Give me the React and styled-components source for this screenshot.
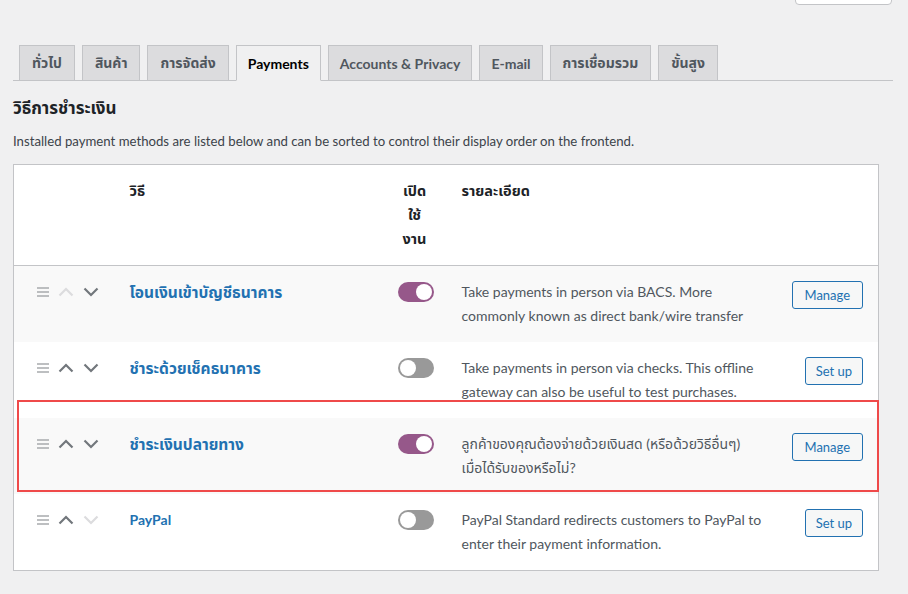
import React from "react";
import styled, { createGlobalStyle } from "styled-components";

const GlobalStyle = createGlobalStyle`
  html, body {
    margin: 0;
    padding: 0;
    background: #f0f0f1;
  }
  body {
    font-family: Lato, "Open Sans", "Noto Sans Thai", sans-serif;
    font-size: 13px;
    color: #3c434a;
  }
`;

const Page = styled.div`
  width: 908px;
  height: 594px;
  overflow: hidden;
`;

const TopBar = styled.div`
  height: 5px;
  display: flex;
  justify-content: flex-end;
  align-items: flex-end;
  overflow: hidden;
  padding-right: 16px;
`;

const HelpButton = styled.div`
  width: 97px;
  height: 30px;
  flex-shrink: 0;
  background: #fff;
  border: 1px solid #c3c4c7;
  border-radius: 0 0 4px 4px;
  box-sizing: border-box;
`;

const TabNav = styled.nav`
  margin: 40px 15px 0 13px;
  padding-left: 6px;
  display: flex;
  gap: 7px;
  border-bottom: 1px solid #c3c4c7;
`;

const Tab = styled.div`
  height: 36px;
  box-sizing: border-box;
  padding: 0 ${(p) => (p.$thai ? "12px" : "11px")};
  display: flex;
  align-items: center;
  border: 1px solid #c3c4c7;
  margin-bottom: -1px;
  background: ${(p) => (p.$active ? "#f0f0f1" : "#dcdcde")};
  border-bottom: 1px solid ${(p) => (p.$active ? "#f0f0f1" : "#c3c4c7")};
  color: ${(p) => (p.$active ? "#000" : "#50575e")};
  font-size: 14px;
  font-weight: 700;
  white-space: nowrap;
`;

const Content = styled.div`
  padding: 0 30px 0 13px;
`;

const Heading = styled.h2`
  margin: 15px 0 0;
  font-size: 17px;
  font-weight: 700;
  color: #1d2327;
  line-height: 24px;
`;

const Intro = styled.p`
  margin: 10px 0 12px;
  line-height: 22px;
  font-size: 13.2px;
  color: #3c434a;
`;

const TableWrap = styled.div`
  position: relative;
`;

const Table = styled.table`
  width: 865px;
  border-collapse: collapse;
  background: #fff;
  border: 1px solid #c3c4c7;
  table-layout: fixed;
`;

const Th = styled.th`
  text-align: ${(p) => p.$align || "left"};
  vertical-align: top;
  padding: 14px 15px;
  font-size: 14.5px;
  font-weight: 700;
  line-height: 24px;
  color: #1d2327;
  border-bottom: 1px solid #c3c4c7;
`;

const Row = styled.tr`
  background: ${(p) => (p.$alt ? "#f9f9f9" : "#fff")};
`;

const Td = styled.td`
  vertical-align: top;
  padding: 14px 15px 14px;
  line-height: 24px;
  text-align: ${(p) => p.$align || "left"};
`;

const SortCell = styled.div`
  display: flex;
  align-items: center;
  gap: 9px;
  height: 24px;
  padding-left: 8px;
`;

const MethodName = styled.a`
  color: #2271b1;
  font-weight: 700;
  font-size: ${(p) => (p.$thai ? "15.5px" : "14px")};
  text-decoration: none;
`;

const Toggle = styled.span`
  display: inline-block;
  position: relative;
  width: 36px;
  height: 20px;
  margin-top: 2px;
  border-radius: 10px;
  background: ${(p) => (p.$on ? "#96588a" : "#999")};
  vertical-align: top;

  &::after {
    content: "";
    position: absolute;
    top: 2px;
    left: ${(p) => (p.$on ? "18px" : "2px")};
    width: 16px;
    height: 16px;
    border-radius: 50%;
    background: #fff;
  }
`;

const Desc = styled.div`
  color: #50575e;
  font-size: 14px;
  white-space: nowrap;
`;

const ActionButton = styled.button`
  margin-top: 1px;
  font-family: inherit;
  font-size: 13px;
  line-height: 26px;
  height: 28px;
  padding: 0 ${(p) => (p.$wide ? "12px" : "10px")};
  color: #2271b1;
  background: #f6f7f7;
  border: 1px solid #2271b1;
  border-radius: 3px;
`;

const Highlight = styled.div`
  position: absolute;
  left: 4px;
  top: 236px;
  width: 862px;
  height: 92px;
  border: 2px solid #ef4a4a;
  box-sizing: border-box;
  pointer-events: none;
`;

const DragIcon = () => (
  <svg width="12" height="10" viewBox="0 0 12 10">
    <g stroke="#a7aaad" strokeWidth="1.5">
      <line x1="0" y1="1" x2="12" y2="1" />
      <line x1="0" y1="5" x2="12" y2="5" />
      <line x1="0" y1="9" x2="12" y2="9" />
    </g>
  </svg>
);

const Chevron = ({ up, disabled }) => (
  <svg width="16" height="10" viewBox="0 0 16 10">
    <polyline
      points={up ? "1.5,8.5 8,2 14.5,8.5" : "1.5,1.5 8,8 14.5,1.5"}
      fill="none"
      stroke={disabled ? "#dcdcde" : "#72777c"}
      strokeWidth="2.2"
    />
  </svg>
);

const tabs = [
  { label: "ทั่วไป", thai: true },
  { label: "สินค้า", thai: true },
  { label: "การจัดส่ง", thai: true },
  { label: "Payments" },
  { label: "Accounts & Privacy" },
  { label: "E-mail" },
  { label: "การเชื่อมรวม", thai: true },
  { label: "ขั้นสูง", thai: true },
];

const methods = [
  {
    name: "โอนเงินเข้าบัญชีธนาคาร",
    thai: true,
    on: true,
    desc: ["Take payments in person via BACS. More", "commonly known as direct bank/wire transfer"],
    action: "Manage",
    upOff: true,
  },
  {
    name: "ชำระด้วยเช็คธนาคาร",
    thai: true,
    on: false,
    desc: ["Take payments in person via checks. This offline", "gateway can also be useful to test purchases."],
    action: "Set up",
  },
  {
    name: "ชำระเงินปลายทาง",
    thai: true,
    on: true,
    desc: ["ลูกค้าของคุณต้องจ่ายด้วยเงินสด (หรือด้วยวิธีอื่นๆ)", "เมื่อได้รับของหรือไม่?"],
    action: "Manage",
  },
  {
    name: "PayPal",
    on: false,
    desc: ["PayPal Standard redirects customers to PayPal to", "enter their payment information."],
    action: "Set up",
    downOff: true,
  },
];

export default function App() {
  return (
    <Page>
      <GlobalStyle />
      <TopBar>
        <HelpButton />
      </TopBar>
      <TabNav>
        {tabs.map((t) => (
          <Tab key={t.label} $thai={t.thai} $active={t.label === "Payments"}>{t.label}</Tab>
        ))}
      </TabNav>
      <Content>
        <Heading>วิธีการชำระเงิน</Heading>
        <Intro>
          Installed payment methods are listed below and can be sorted to control their display order on the frontend.
        </Intro>
        <TableWrap>
          <Table>
            <colgroup>
              <col style={{ width: 101 }} />
              <col style={{ width: 268 }} />
              <col style={{ width: 64 }} />
              <col style={{ width: 330 }} />
              <col style={{ width: 102 }} />
            </colgroup>
            <thead>
              <tr>
                <Th />
                <Th>วิธี</Th>
                <Th $align="center">เปิด<br />ใช้<br />งาน</Th>
                <Th>รายละเอียด</Th>
                <Th />
              </tr>
            </thead>
            <tbody>
              {methods.map((m, i) => (
                <Row key={m.name} $alt={i % 2 === 0}>
                  <Td>
                    <SortCell>
                      <DragIcon />
                      <Chevron up disabled={m.upOff} />
                      <Chevron disabled={m.downOff} />
                    </SortCell>
                  </Td>
                  <Td><MethodName $thai={m.thai}>{m.name}</MethodName></Td>
                  <Td $align="center"><Toggle $on={m.on} /></Td>
                  <Td>
                    <Desc>
                      {m.desc[0]}
                      <br />
                      {m.desc[1]}
                    </Desc>
                  </Td>
                  <Td $align="right">
                    <ActionButton $wide={m.action === "Manage"}>{m.action}</ActionButton>
                  </Td>
                </Row>
              ))}
            </tbody>
          </Table>
          <Highlight />
        </TableWrap>
      </Content>
    </Page>
  );
}
